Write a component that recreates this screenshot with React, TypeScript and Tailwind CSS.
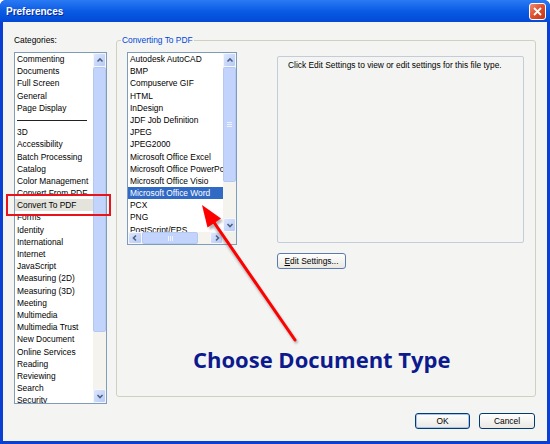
import React from "react";

const leftItems: (string | null)[] = [
  "Commenting",
  "Documents",
  "Full Screen",
  "General",
  "Page Display",
  null,
  "3D",
  "Accessibility",
  "Batch Processing",
  "Catalog",
  "Color Management",
  "Convert From PDF",
  "Convert To PDF",
  "Forms",
  "Identity",
  "International",
  "Internet",
  "JavaScript",
  "Measuring (2D)",
  "Measuring (3D)",
  "Meeting",
  "Multimedia",
  "Multimedia Trust",
  "New Document",
  "Online Services",
  "Reading",
  "Reviewing",
  "Search",
  "Security",
];

const midItems = [
  "Autodesk AutoCAD",
  "BMP",
  "Compuserve GIF",
  "HTML",
  "InDesign",
  "JDF Job Definition",
  "JPEG",
  "JPEG2000",
  "Microsoft Office Excel",
  "Microsoft Office PowerPoint",
  "Microsoft Office Visio",
  "Microsoft Office Word",
  "PCX",
  "PNG",
  "PostScript/EPS",
];

type Dir = "up" | "down" | "left" | "right";

function Chevron({ dir }: { dir: Dir }) {
  const paths: Record<Dir, string> = {
    up: "M1.5 5.5 L4 3 L6.5 5.5",
    down: "M1.5 3 L4 5.5 L6.5 3",
    left: "M5 1.5 L2.5 4 L5 6.5",
    right: "M3 1.5 L5.5 4 L3 6.5",
  };
  return (
    <svg width="8" height="8" viewBox="0 0 8 8">
      <path d={paths[dir]} fill="none" stroke="#4D6185" strokeWidth="1.6" />
    </svg>
  );
}

function SBtn({ dir, className }: { dir: Dir; className: string }) {
  return (
    <div
      className={`flex shrink-0 items-center justify-center rounded-[2px] border border-[#F4F7FE] bg-linear-to-br from-[#DDE7FD] to-[#B7CAF5] ${className}`}
    >
      <Chevron dir={dir} />
    </div>
  );
}

function XPButton({ children, className }: { children: React.ReactNode; className: string }) {
  return (
    <div
      className={`flex items-center justify-center rounded-[3px] border border-[#003C74] bg-linear-to-b from-[#FFFFFF] to-[#E9E8E2] text-[8.4px] leading-none text-black ${className}`}
    >
      {children}
    </div>
  );
}

export default function App() {
  return (
    <div className="relative flex h-[444px] w-[550px] flex-col overflow-hidden rounded-t-[6px] bg-[#0B3FD4] font-['Liberation_Sans',Arial,sans-serif]">
      {/* Title bar */}
      <div className="flex h-[22px] shrink-0 items-center bg-linear-to-b from-[#2A7AF4] via-[#0A5BE5] to-[#0349D6] pl-[6px] pr-[4px]">
        <span className="text-[10px] font-bold text-white [text-shadow:1px_1px_0_#0A2A9A]">Preferences</span>
        <div className="ml-auto flex h-[17px] w-[17px] items-center justify-center rounded-[3px] border border-white bg-linear-to-br from-[#EE8A70] via-[#DD4E2C] to-[#C23414]">
          <svg width="9" height="9" viewBox="0 0 9 9">
            <path d="M1 1 L8 8 M8 1 L1 8" stroke="white" strokeWidth="1.8" />
          </svg>
        </div>
      </div>

      {/* Content */}
      <div className="mx-[3px] mb-[3px] flex flex-1 flex-col bg-[#F4F5F3]">
        <div className="flex pl-[11px] pt-[12px]">
          {/* Categories */}
          <div className="flex w-[93px] flex-col">
            <div className="h-[12px] text-[8.4px] leading-[12px] text-black">Categories:</div>
            <div className="mt-[6px] flex h-[352px] border border-[#7F9DB9] bg-white">
              <div className="flex-1 overflow-hidden">
                {leftItems.map((it, i) =>
                  it === null ? (
                    <div key={i} className="flex h-[12.2px] items-center pl-[2px]">
                      <div className="h-px w-[70px] bg-[#222]" />
                    </div>
                  ) : (
                    <div
                      key={i}
                      className={`h-[12.2px] whitespace-nowrap pl-[2px] text-[8.4px] leading-[12.2px] text-black ${
                        it === "Convert To PDF" ? "bg-[#E4E4DC]" : ""
                      }`}
                    >
                      {it}
                    </div>
                  )
                )}
              </div>
              <div className="flex w-[13px] flex-col bg-[#F4F3EE]">
                <SBtn dir="up" className="h-[14px]" />
                <div className="h-[265px] shrink-0 rounded-[2px] border border-[#B5C8F2] bg-[#C3D4FC]" />
                <div className="flex-1" />
                <SBtn dir="down" className="h-[14px]" />
              </div>
            </div>
          </div>

          {/* Group box */}
          <fieldset className="ml-[9px] h-[363px] w-[420px] rounded-[3px] border border-[#D0D0BF]">
            <legend className="ml-[4px] px-[1px] text-[8.4px] leading-[12px] text-[#0046D5]">Converting To PDF</legend>
            <div className="mt-[6px] flex pl-[10px]">
              {/* File type list */}
              <div className="flex h-[193px] w-[110px] flex-col border border-[#7F9DB9] bg-white">
                <div className="flex flex-1 overflow-hidden">
                  <div className="flex-1 overflow-hidden">
                    {midItems.map((it) => (
                      <div
                        key={it}
                        className={`h-[12.2px] overflow-hidden whitespace-nowrap pl-[2px] text-[8.4px] leading-[12.2px] ${
                          it === "Microsoft Office Word" ? "bg-[#316AC5] text-white" : "text-black"
                        }`}
                      >
                        {it}
                      </div>
                    ))}
                  </div>
                  <div className="flex w-[13px] flex-col bg-[#F4F3EE]">
                    <SBtn dir="up" className="h-[14px]" />
                    <div className="flex h-[115px] shrink-0 items-center justify-center rounded-[2px] border border-[#B5C8F2] bg-[#C3D4FC]">
                      <div className="flex flex-col gap-[1px]">
                        <div className="h-px w-[5px] bg-[#EEF3FE]" />
                        <div className="h-px w-[5px] bg-[#EEF3FE]" />
                        <div className="h-px w-[5px] bg-[#EEF3FE]" />
                      </div>
                    </div>
                    <div className="flex-1" />
                    <SBtn dir="down" className="h-[14px]" />
                  </div>
                </div>
                <div className="flex h-[12px] shrink-0 bg-[#F4F3EE]">
                  <SBtn dir="left" className="w-[14px]" />
                  <div className="flex w-[56px] shrink-0 items-center justify-center rounded-[2px] border border-[#B5C8F2] bg-[#C3D4FC]">
                    <div className="flex gap-[1px]">
                      <div className="h-[5px] w-px bg-[#EEF3FE]" />
                      <div className="h-[5px] w-px bg-[#EEF3FE]" />
                      <div className="h-[5px] w-px bg-[#EEF3FE]" />
                    </div>
                  </div>
                  <div className="w-[12px] shrink-0" />
                  <SBtn dir="right" className="w-[13px]" />
                  <div className="w-[13px] shrink-0 bg-[#F1F0EA]" />
                </div>
              </div>

              {/* Right side */}
              <div className="ml-[40px] mt-[4px] flex flex-col">
                <div className="h-[187px] w-[247px] rounded-[2px] border border-[#C2CCDB] pl-[10px] pt-[2px] text-[8.4px] leading-[12px] text-black">
                  Click Edit Settings to view or edit settings for this file type.
                </div>
                <XPButton className="mt-[10px] h-[16px] w-[69px] border-[#5A7BB0]">
                  <span>
                    <span className="underline">E</span>dit Settings...
                  </span>
                </XPButton>
              </div>
            </div>
            <div className="mt-[76px] pl-[76px] font-['Open_Sans',sans-serif] text-[22px] font-bold leading-[28px] text-[#0D1A8E]">
              Choose Document Type
            </div>
          </fieldset>
        </div>

        {/* Bottom buttons */}
        <div className="mt-[9px] flex justify-end gap-[9px] pr-[12px]">
          <XPButton className="h-[16px] w-[55px] shadow-[inset_0_0_0_1px_#A9C3F0]">OK</XPButton>
          <XPButton className="h-[16px] w-[56px]">Cancel</XPButton>
        </div>
      </div>

      {/* Annotation overlay */}
      <svg className="pointer-events-none absolute left-0 top-0" width="550" height="444" viewBox="0 0 550 444">
        <defs>
          <filter id="sh" x="-20%" y="-20%" width="140%" height="140%">
            <feGaussianBlur stdDeviation="1.2" />
          </filter>
        </defs>
        <rect x="7" y="195" width="103" height="20" fill="none" stroke="#E8141B" strokeWidth="2" />
        <g filter="url(#sh)" opacity="0.55">
          <line x1="297" y1="343" x2="212" y2="222" stroke="#777" strokeWidth="3.2" />
          <polygon points="204,208 210,230 223,221" fill="#777" />
        </g>
        <line x1="295" y1="340" x2="211" y2="218" stroke="#FF0000" strokeWidth="3" strokeLinecap="round" />
        <polygon points="202,205 207.5,227.5 221,218.5" fill="#FF0000" />
      </svg>
    </div>
  );
}
